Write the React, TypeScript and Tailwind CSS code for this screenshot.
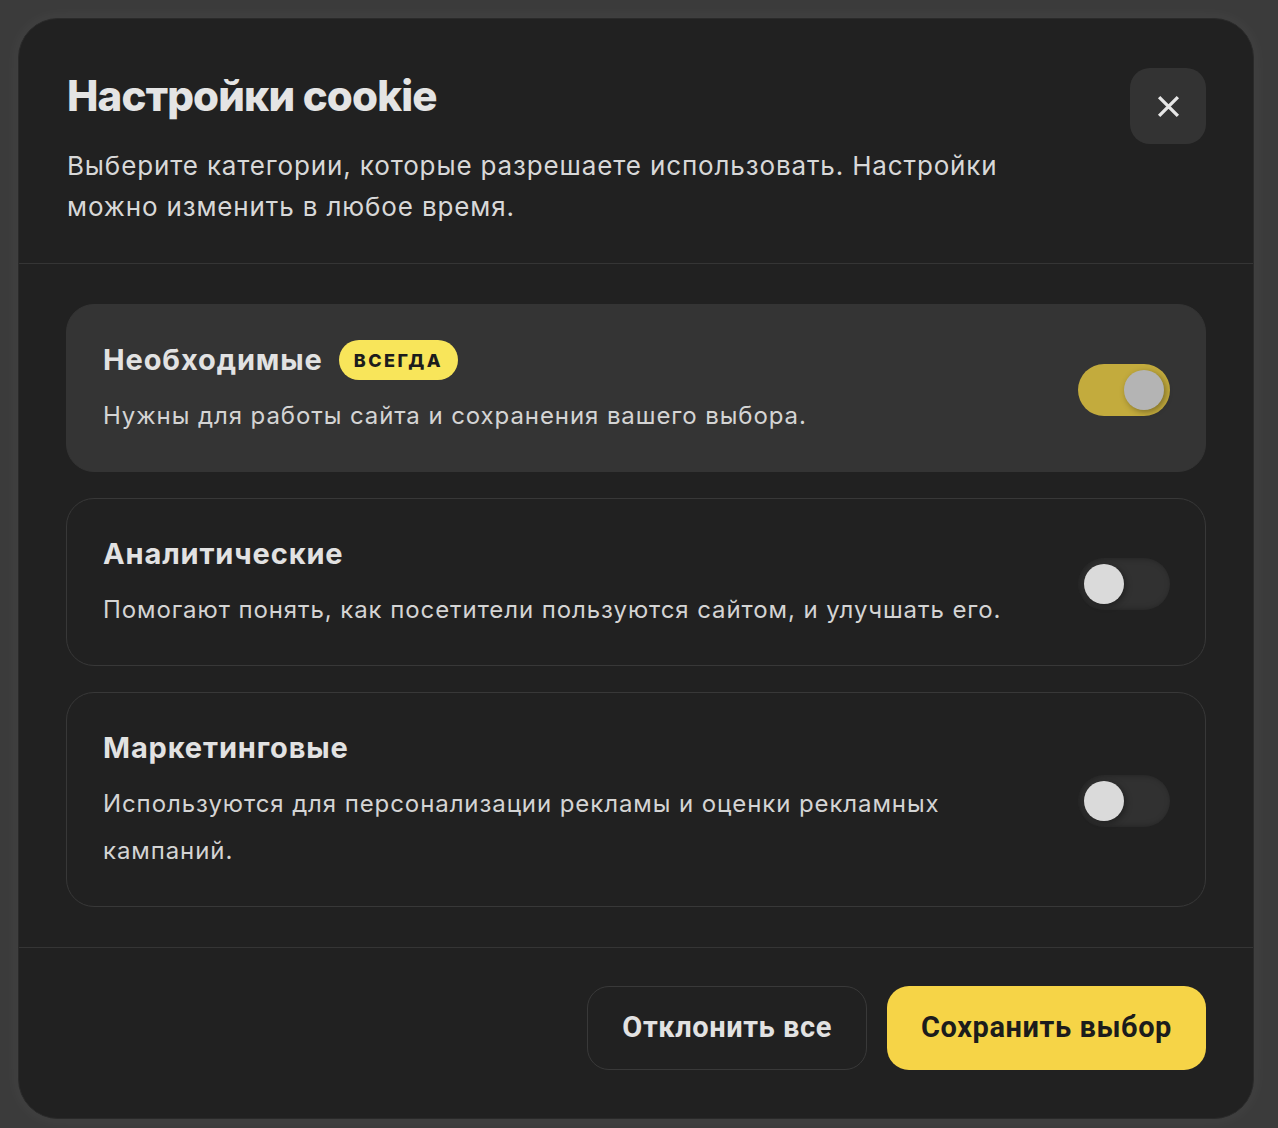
import { useState } from 'react'

type Category = {
  key: string
  title: string
  description: string
  always?: boolean
}

const categories: Category[] = [
  {
    key: 'necessary',
    title: 'Необходимые',
    description: 'Нужны для работы сайта и сохранения вашего выбора.',
    always: true,
  },
  {
    key: 'analytics',
    title: 'Аналитические',
    description: 'Помогают понять, как посетители пользуются сайтом, и улучшать его.',
  },
  {
    key: 'marketing',
    title: 'Маркетинговые',
    description: 'Используются для персонализации рекламы и оценки рекламных кампаний.',
  },
]

function Toggle({ on, locked, onToggle }: { on: boolean; locked?: boolean; onToggle: () => void }) {
  return (
    <button
      type="button"
      role="switch"
      aria-checked={on}
      disabled={locked}
      onClick={onToggle}
      className={`flex h-[52px] w-[92px] shrink-0 items-center rounded-full p-[6px] ${
        on ? 'justify-end bg-[#c3ab3d]' : 'justify-start bg-[#313131] shadow-[inset_2px_0_6px_rgba(0,0,0,0.35)]'
      }`}
    >
      <span
        className={`block h-10 w-10 rounded-full shadow-[2px_2px_6px_rgba(0,0,0,0.35)] ${
          on ? 'bg-[#b4b4b4]' : 'bg-[#dadada]'
        }`}
      />
    </button>
  )
}

export default function App() {
  const [enabled, setEnabled] = useState<Record<string, boolean>>({
    necessary: true,
    analytics: false,
    marketing: false,
  })

  return (
    <div className="min-h-screen bg-[#3b3b3b] pl-[18px] pt-[18px] font-['Inter','Noto_Sans',sans-serif]">
      <div className="w-[1236px] overflow-hidden rounded-[40px] border border-[#2a2a2a] bg-[#212121] shadow-[0_0_18px_rgba(255,255,255,0.05)]">
        {/* Header */}
        <div className="flex items-start justify-between border-b border-[#353535] pb-9 pl-12 pr-[47px] pt-12">
          <div>
            <h2 className="mt-1 text-[42px] font-extrabold leading-[50px] tracking-[-0.02em] text-[#e4e4e4]">
              Настройки cookie
            </h2>
            <p className="mt-6 max-w-[960px] text-[26px] leading-[41px] tracking-[0.033em] text-[#d8d8d8]">
              Выберите категории, которые разрешаете использовать. Настройки можно изменить в любое время.
            </p>
          </div>
          <button
            type="button"
            className="mt-[1px] flex h-[76px] w-[76px] shrink-0 items-center justify-center rounded-[20px] bg-[#333333]"
          >
            <svg width="25" height="25" viewBox="0 0 24 24" fill="none" stroke="#e6e6e6" strokeWidth="3.2">
              <path d="M3 3 21 21M21 3 3 21" />
            </svg>
          </button>
        </div>

        {/* Categories */}
        <div className="flex flex-col gap-[26px] py-10 pl-[47px] pr-[47px]">
          {categories.map(c => (
            <div
              key={c.key}
              className={`flex items-center gap-8 rounded-[28px] border pb-8 pl-9 pr-[35px] pt-[35px] ${
                c.always ? 'border-[#343434] bg-[#343434]' : 'border-[#383838]'
              }`}
            >
              <div className="flex-1">
                <div className="flex h-10 items-center gap-4">
                  <h3 className="text-[29px] font-bold tracking-[0.03em] text-[#e2e2e2]">{c.title}</h3>
                  {c.always && (
                    <span className="flex h-10 items-center rounded-full bg-[#f8e55a] px-[15px] text-[18px] font-extrabold tracking-[0.14em] text-[#1c1c1c]">
                      ВСЕГДА
                    </span>
                  )}
                </div>
                <p className="mt-3 text-[24px] leading-[47px] tracking-[0.038em] text-[#d4d4d4]">{c.description}</p>
              </div>
              <Toggle
                on={enabled[c.key]}
                locked={c.always}
                onToggle={() => setEnabled(prev => ({ ...prev, [c.key]: !prev[c.key] }))}
              />
            </div>
          ))}
        </div>

        {/* Footer */}
        <div className="flex justify-end gap-5 border-t border-[#353535] pb-12 pl-12 pr-[47px] pt-[38px]">
          <button
            type="button"
            className="h-[84px] rounded-[22px] border border-[#393939] px-[34px] font-['Roboto',sans-serif] text-[29px] font-bold tracking-[0.02em] text-[#e2e2e2]"
          >
            Отклонить все
          </button>
          <button
            type="button"
            className="h-[84px] rounded-[22px] bg-[#f6d447] px-[34px] font-['Roboto',sans-serif] text-[29px] font-bold tracking-[0.02em] text-[#1c1c1c]"
          >
            Сохранить выбор
          </button>
        </div>
      </div>
    </div>
  )
}
